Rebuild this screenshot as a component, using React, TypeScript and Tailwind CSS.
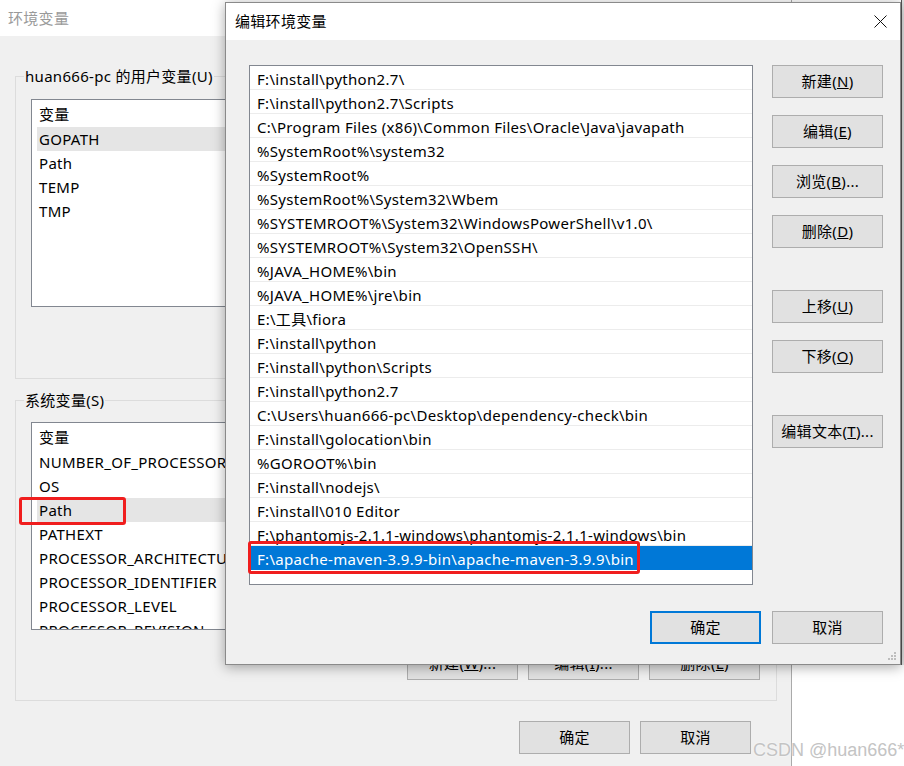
import React from 'react';

const userVars = ['GOPATH', 'Path', 'TEMP', 'TMP'];
const sysVars = [
  'NUMBER_OF_PROCESSORS',
  'OS',
  'Path',
  'PATHEXT',
  'PROCESSOR_ARCHITECTURE',
  'PROCESSOR_IDENTIFIER',
  'PROCESSOR_LEVEL',
  'PROCESSOR_REVISION',
];

const paths = [
  'F:\\install\\python2.7\\',
  'F:\\install\\python2.7\\Scripts',
  'C:\\Program Files (x86)\\Common Files\\Oracle\\Java\\javapath',
  '%SystemRoot%\\system32',
  '%SystemRoot%',
  '%SystemRoot%\\System32\\Wbem',
  '%SYSTEMROOT%\\System32\\WindowsPowerShell\\v1.0\\',
  '%SYSTEMROOT%\\System32\\OpenSSH\\',
  '%JAVA_HOME%\\bin',
  '%JAVA_HOME%\\jre\\bin',
  'E:\\工具\\fiora',
  'F:\\install\\python',
  'F:\\install\\python\\Scripts',
  'F:\\install\\python2.7',
  'C:\\Users\\huan666-pc\\Desktop\\dependency-check\\bin',
  'F:\\install\\golocation\\bin',
  '%GOROOT%\\bin',
  'F:\\install\\nodejs\\',
  'F:\\install\\010 Editor',
  'F:\\phantomjs-2.1.1-windows\\phantomjs-2.1.1-windows\\bin',
  'F:\\apache-maven-3.9.9-bin\\apache-maven-3.9.9\\bin',
];

const Btn: React.FC<{ children: React.ReactNode; primary?: boolean }> = ({ children, primary }) => (
  <div
    className={`flex items-center justify-center h-[33px] w-[111px] shrink-0 bg-[#e1e1e1] text-[15px] text-black whitespace-nowrap ${
      primary ? 'border-2 border-[#0078d7]' : 'border border-[#adadad]'
    }`}
  >
    {children}
  </div>
);

const VarList: React.FC<{ items: string[]; selected: string }> = ({ items, selected }) => (
  <div className="h-[208px] w-full bg-white border border-[#828790] overflow-hidden pl-[5px]">
    <div className="h-[27px] flex items-center pl-[2px] pt-[2px]">变量</div>
    {items.map((v) => (
      <div
        key={v}
        className={`h-[24px] flex items-center pl-[2px] whitespace-nowrap ${v === selected ? 'bg-[#e5e5e5]' : ''}`}
      >
        {v}
      </div>
    ))}
  </div>
);

export default function App() {
  return (
    <div className="relative w-[904px] h-[766px] overflow-hidden bg-white text-[15px] tracking-[0.3px] text-black font-['Noto_Sans','Noto_Sans_CJK_SC',sans-serif]">
      {/* window far right, behind */}
      <div className="absolute left-[901px] top-0 w-[10px] h-[665px] bg-[#e4e4e4] border-l border-[#555]" />

      {/* 环境变量 (background window) */}
      <div className="absolute left-0 top-0 w-[792px] h-[800px] bg-[#f0f0f0] border-r border-[#aaaaaa] flex flex-col">
        <div className="h-[36px] shrink-0 bg-white flex items-center pl-[8px] text-[#9a9a9a]">环境变量</div>
        <div className="pl-[15px] pr-[14px] flex flex-col">
          <fieldset className="mt-[30px] border border-[#dcdcdc] min-w-0">
            <legend className="ml-[8px] px-px leading-[20px]">huan666-pc 的用户变量(U)</legend>
            <div className="pt-[13px] pl-[15px] pr-[16px] pb-[20px]">
              <VarList items={userVars} selected="GOPATH" />
              <div className="mt-[18px] flex justify-end gap-[10px]">
                <Btn>新建(<u>N</u>)...</Btn>
                <Btn>编辑(<u>E</u>)...</Btn>
                <Btn>删除(<u>D</u>)</Btn>
              </div>
            </div>
          </fieldset>

          <fieldset className="mt-[11px] border border-[#dcdcdc] min-w-0">
            <legend className="ml-[8px] px-px leading-[20px]">系统变量(S)</legend>
            <div className="pt-[12px] pl-[15px] pr-[16px] pb-[20px]">
              <div className="relative">
                <VarList items={sysVars} selected="Path" />
                <div className="absolute left-[-12px] top-[75px] w-[107px] h-[28px] border-[3px] border-[#f01e1e] rounded-[3px]" />
              </div>
              <div className="mt-[17px] flex justify-end gap-[10px]">
                <Btn>新建(<u>W</u>)...</Btn>
                <Btn>编辑(<u>I</u>)...</Btn>
                <Btn>删除(<u>L</u>)</Btn>
              </div>
            </div>
          </fieldset>

          <div className="mt-[20px] flex justify-end gap-[10px] pr-[26px]">
            <Btn>确定</Btn>
            <Btn>取消</Btn>
          </div>
        </div>
      </div>

      {/* 编辑环境变量 (front dialog) */}
      <div className="absolute left-[225px] top-[2px] w-[676px] bg-[#f0f0f0] border border-[#8a8a8a] shadow-[0_2px_12px_rgba(0,0,0,0.35)] flex flex-col">
        <div className="h-[37px] bg-white flex items-center justify-between pl-[9px] pr-[13px]">
          <span>编辑环境变量</span>
          <svg width="13" height="13" viewBox="0 0 13 13">
            <path d="M0.5 0.5L12.5 12.5M12.5 0.5L0.5 12.5" stroke="#111" strokeWidth="1" />
          </svg>
        </div>
        <div className="pt-[25px] pl-[23px] pr-[17px] pb-[20px] flex flex-col">
          <div className="flex">
            <div className="relative">
              <div className="w-[504px] h-[520px] bg-white border border-[#828790] overflow-hidden">
                {paths.map((p, i) => {
                  const sel = i === paths.length - 1;
                  return (
                    <div
                      key={p}
                      className={`h-[24px] flex items-center pl-[7px] pt-[4px] whitespace-nowrap border-b ${
                        sel ? 'bg-[#0078d7] text-white border-[#0078d7]' : 'border-[#ececec]'
                      }`}
                    >
                      {p}
                    </div>
                  );
                })}
              </div>
              <div className="absolute left-[-1px] top-[476px] w-[392px] h-[33px] border-[3px] border-[#f01e1e] rounded-[3px]" />
            </div>
            <div className="ml-[19px] flex flex-col">
              <Btn>新建(<u>N</u>)</Btn>
              <div className="mt-[17px]"><Btn>编辑(<u>E</u>)</Btn></div>
              <div className="mt-[17px]"><Btn>浏览(<u>B</u>)...</Btn></div>
              <div className="mt-[17px]"><Btn>删除(<u>D</u>)</Btn></div>
              <div className="mt-[42px]"><Btn>上移(<u>U</u>)</Btn></div>
              <div className="mt-[17px]"><Btn>下移(<u>O</u>)</Btn></div>
              <div className="mt-[42px]"><Btn>编辑文本(<u>T</u>)...</Btn></div>
            </div>
          </div>
          <div className="mt-[26px] flex justify-end gap-[11px]">
            <Btn primary>确定</Btn>
            <Btn>取消</Btn>
          </div>
        </div>
        <svg className="absolute right-[3px] bottom-[3px]" width="9" height="9" viewBox="0 0 9 9">
          <rect x="6" y="0" width="2" height="2" fill="#bdbdbd" />
          <rect x="3" y="3" width="2" height="2" fill="#bdbdbd" />
          <rect x="6" y="3" width="2" height="2" fill="#bdbdbd" />
          <rect x="0" y="6" width="2" height="2" fill="#bdbdbd" />
          <rect x="3" y="6" width="2" height="2" fill="#bdbdbd" />
          <rect x="6" y="6" width="2" height="2" fill="#bdbdbd" />
        </svg>
      </div>

      {/* watermark */}
      <div className="absolute left-[753px] top-[739px] whitespace-nowrap tracking-normal text-[18px] leading-[22px] text-[#c4c4c4] font-['Liberation_Sans',sans-serif] [text-shadow:0_0_2px_#ffffff]">
        CSDN @huan666*
      </div>
    </div>
  );
}
